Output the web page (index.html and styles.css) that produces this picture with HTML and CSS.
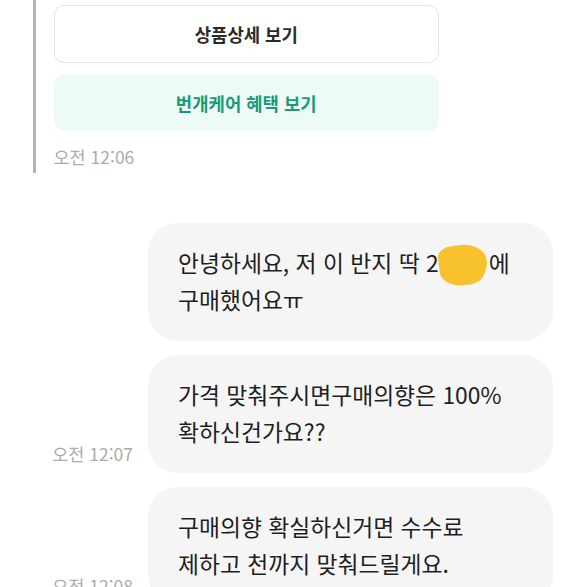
FILE: index.html
```html
<!DOCTYPE html>
<html lang="ko">
<head>
    <meta charset="UTF-8">
    <meta name="viewport" content="width=device-width, initial-scale=1.0">
    <title>채팅</title>
    <link rel="stylesheet" href="styles.css">
</head>
<body>
    <div class="채팅">
        <div class="받은-메시지">
            <div class="버튼 버튼-기본">상품상세 보기</div>
            <div class="버튼 버튼-케어">번개케어 혜택 보기</div>
            <p class="시간">오전 12:06</p>
        </div>

        <div class="보낸-줄 첫-줄">
            <div class="말풍선">안녕하세요, 저 이 반지 딱 2<span class="가림"></span>에<br>구매했어요ㅠ</div>
        </div>

        <div class="보낸-줄">
            <p class="시간">오전 12:07</p>
            <div class="말풍선">가격 맞춰주시면구매의향은 100%<br>확하신건가요??</div>
        </div>

        <div class="보낸-줄">
            <p class="시간">오전 12:08</p>
            <div class="말풍선">구매의향 확실하신거면 수수료<br>제하고 천까지 맞춰드릴게요.</div>
        </div>
    </div>
</body>
</html>
```

FILE: styles.css
```css
* {
    box-sizing: border-box;
    margin: 0;
    padding: 0;
}

body {
    font-family: 'Noto Sans CJK KR', 'Noto Sans', sans-serif;
    background: #fff;
    color: #1e1e1e;
    overflow: hidden;
}

.받은-메시지 {
    margin-left: 33px;
    width: 406px;
    border-left: 3.5px solid #b3b3b3;
    padding: 5px 0 6px 17.5px;
}

.버튼 {
    height: 58px;
    display: flex;
    align-items: center;
    justify-content: center;
    border-radius: 10px;
    font-size: 17.8px;
    font-weight: 700;
}

.버튼-기본 {
    border: 1px solid #e4e4e4;
    color: #2b2b2b;
}

.버튼-케어 {
    margin-top: 12px;
    height: 56px;
    background: #eefaf6;
    color: #1a9a78;
}

.시간 {
    font-size: 17.5px;
    line-height: 20px;
    color: #ababab;
    white-space: nowrap;
}

.받은-메시지 .시간 {
    margin-top: 16px;
}

.보낸-줄 {
    display: flex;
    justify-content: flex-end;
    align-items: flex-end;
    gap: 15px;
    padding-right: 34px;
    margin-top: 14px;
}

.보낸-줄 .시간 {
    margin-bottom: 9px;
}

.첫-줄 {
    margin-top: 50px;
}

.말풍선 {
    width: 405px;
    background: #f5f5f5;
    border-radius: 30px;
    padding: 21px 16px 23px 30px;
    font-size: 22.8px;
    line-height: 37px;
    white-space: nowrap;
}

.가림 {
    display: inline-block;
    width: 48px;
    height: 40px;
    margin: -10px 2px -10px 0;
    vertical-align: -3px;
    background: #f8c22c;
    border-radius: 40% 60% 46% 54% / 30% 55% 70% 50%;
    transform: rotate(-6deg);
}
```
